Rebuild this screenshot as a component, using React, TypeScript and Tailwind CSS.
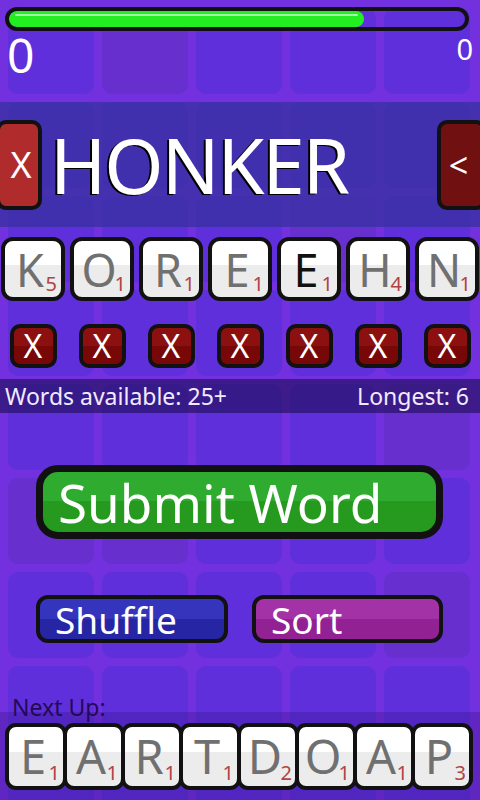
import React from 'react';

const font = "font-['Noto_Sans','Open_Sans','DejaVu_Sans',sans-serif]";

// which background squares are a shade more magenta
const darkCells = new Set(['0-1', '4-4', '5-0', '5-1', '6-4', '2-3']);

function BackgroundGrid() {
  const cells = [];
  for (let r = 0; r < 9; r++) {
    for (let c = 0; c < 5; c++) {
      const dark = darkCells.has(`${r}-${c}`);
      cells.push(
        <div
          key={`${r}-${c}`}
          className={`h-[86px] w-[86px] rounded-[10px] ${dark ? 'bg-[#682fcf]' : 'bg-[#602fdc]'}`}
        />
      );
    }
  }
  return (
    <div className="absolute inset-0 grid grid-cols-[repeat(5,86px)] auto-rows-[86px] gap-[8px] p-[8px]">
      {cells}
    </div>
  );
}

function LetterTile({ letter, value, dark }: { letter: string; value: number; dark?: boolean }) {
  return (
    <div className="relative h-[64px] w-[64px] overflow-hidden rounded-[12px] border-4 border-[#111] bg-[linear-gradient(to_bottom,#ffffff_0%,#ffffff_42%,#ececec_42%,#ececec_100%)]">
      <div className={`flex h-full items-center justify-center pr-[6px] text-[45px] leading-none ${dark ? 'text-[#111]' : 'text-[#707070]'}`}>
        {letter}
      </div>
      <span className="absolute bottom-[3px] right-[4px] text-[20px] leading-none text-[#b04444]">{value}</span>
    </div>
  );
}

function NextTile({ letter, value, first }: { letter: string; value: number; first?: boolean }) {
  return (
    <div
      className={`relative h-[67px] w-[62px] overflow-hidden rounded-[11px] border-4 border-[#111] bg-[linear-gradient(to_bottom,#ffffff_0%,#ffffff_42%,#ececec_42%,#ececec_100%)] ${first ? '' : '-ml-[4px]'}`}
    >
      <div className="flex h-full items-center justify-center pr-[6px] text-[47px] leading-none text-[#707070]">
        {letter}
      </div>
      <span className="absolute bottom-[3px] right-[3px] text-[20px] leading-none text-[#b04444]">{value}</span>
    </div>
  );
}

function RemoveButton() {
  return (
    <div className="flex w-[64px] justify-center">
      <div className="flex h-[44px] w-[47px] items-center justify-center rounded-[10px] border-4 border-[#111] bg-[linear-gradient(to_bottom,#8c1010_0%,#8c1010_50%,#780808_50%,#780808_100%)] text-[32px] leading-none text-white">
        X
      </div>
    </div>
  );
}

const rack = [
  { letter: 'K', value: 5 },
  { letter: 'O', value: 1 },
  { letter: 'R', value: 1 },
  { letter: 'E', value: 1 },
  { letter: 'E', value: 1, dark: true },
  { letter: 'H', value: 4 },
  { letter: 'N', value: 1 },
];

const nextUp = [
  { letter: 'E', value: 1 },
  { letter: 'A', value: 1 },
  { letter: 'R', value: 1 },
  { letter: 'T', value: 1 },
  { letter: 'D', value: 2 },
  { letter: 'O', value: 1 },
  { letter: 'A', value: 1 },
  { letter: 'P', value: 3 },
];

export default function App() {
  return (
    <div className={`relative h-[800px] w-[480px] overflow-hidden bg-[#7230de] ${font}`}>
      <BackgroundGrid />

      <div className="relative flex flex-col">
        {/* timer bar */}
        <div className="ml-[5px] mt-[7px] h-[24px] w-[464px] overflow-hidden rounded-full border-4 border-[#111]">
          <div className="h-full w-[355px] rounded-full bg-[#22ee22] pt-[3px]">
            <div className="mx-[6px] h-[2px] rounded-full bg-[#a6ffa6]" />
          </div>
        </div>

        {/* scores */}
        <div className="flex h-[71px] items-start justify-between pl-[7px] pr-[7px] text-white">
          <span className="text-[48px] leading-none">0</span>
          <span className="mt-[3px] text-[29px] leading-none">0</span>
        </div>

        {/* current word */}
        <div className="flex h-[125px] items-center bg-[rgba(57,49,161,0.78)]">
          <div className="-ml-[4px] flex h-[90px] w-[46px] items-center justify-center rounded-[10px] border-4 border-[#111] bg-[#b02c2c] pl-[4px] text-[36px] leading-none text-white">
            X
          </div>
          <span className="ml-[8px] text-[76px] leading-none tracking-[-2px] text-white [text-shadow:-2px_1px_0_#000]">
            HONKER
          </span>
          <div className="-mr-[6px] ml-auto flex h-[90px] w-[49px] items-center justify-center rounded-[10px] border-4 border-[#111] bg-[#701010] pr-[6px] text-[34px] leading-none text-white">
            &lt;
          </div>
        </div>

        {/* rack */}
        <div className="mt-[10px] flex justify-between px-[1px]">
          {rack.map((t, i) => (
            <LetterTile key={i} letter={t.letter} value={t.value} dark={t.dark} />
          ))}
        </div>

        {/* remove buttons */}
        <div className="mt-[23px] flex justify-between px-[1px]">
          {rack.map((_, i) => (
            <RemoveButton key={i} />
          ))}
        </div>

        {/* info bar */}
        <div className="mt-[11px] flex h-[34px] items-center justify-between bg-[rgba(31,15,87,0.62)] pl-[5px] pr-[11px] text-[23px] leading-none text-[#f2eaff]">
          <span>Words available: 25+</span>
          <span>Longest: 6</span>
        </div>

        {/* submit */}
        <div className="ml-[36px] mt-[52px] flex h-[74px] w-[407px] items-center overflow-hidden rounded-[22px] border-[7px] border-[#111] bg-[linear-gradient(to_bottom,#2fab2f_0%,#2fab2f_48%,#26991f_48%,#26991f_100%)] pl-[15px] text-[53px] leading-none text-white">
          Submit Word
        </div>

        {/* shuffle / sort */}
        <div className="ml-[36px] mt-[56px] flex gap-[24px]">
          <div className="flex h-[48px] w-[192px] items-center rounded-[12px] border-4 border-[#111] bg-[linear-gradient(to_bottom,#3434bc_0%,#3434bc_50%,#2626a4_50%,#2626a4_100%)] pl-[15px] text-[37px] leading-none text-white">
            Shuffle
          </div>
          <div className="flex h-[48px] w-[191px] items-center rounded-[12px] border-4 border-[#111] bg-[linear-gradient(to_bottom,#a232a6_0%,#a232a6_50%,#922294_50%,#922294_100%)] pl-[15px] text-[37px] leading-none text-white">
            Sort
          </div>
        </div>

        {/* next up */}
        <div className="mt-[53px] h-[104px] bg-[linear-gradient(to_bottom,transparent_0px,transparent_16px,rgba(30,3,92,0.22)_16px)]">
          <div className="h-[22px] pl-[12px] text-[23px] leading-none text-[#220a55]">Next Up:</div>
          <div className="ml-[5px] mt-[5px] flex">
            {nextUp.map((t, i) => (
              <NextTile key={i} letter={t.letter} value={t.value} first={i === 0} />
            ))}
          </div>
        </div>
      </div>
    </div>
  );
}
